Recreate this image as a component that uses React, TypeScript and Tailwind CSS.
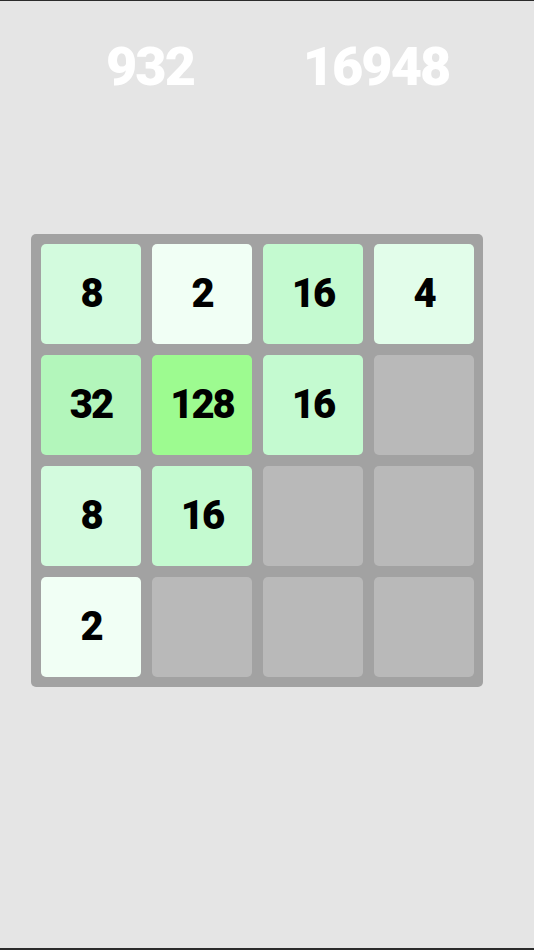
import React from "react";

type Cell = number | null;

const board: Cell[][] = [
  [8, 2, 16, 4],
  [32, 128, 16, null],
  [8, 16, null, null],
  [2, null, null, null],
];

const tileColor: Record<number, string> = {
  2: "bg-[#f1fff5]",
  4: "bg-[#e2fdea]",
  8: "bg-[#d3fbde]",
  16: "bg-[#c4fad0]",
  32: "bg-[#b3f6bb]",
  128: "bg-[#9dfb90]",
};

function Tile({ value }: { value: Cell }) {
  if (value === null) {
    return <div className="h-[100px] w-[100px] rounded-[5px] bg-[#b9b9b9]" />;
  }
  return (
    <div
      className={`flex h-[100px] w-[100px] items-center justify-center rounded-[5px] ${tileColor[value]}`}
    >
      <span className="text-[40px] leading-none font-black tracking-[-2px] text-black [font-family:Roboto,'Liberation_Sans',sans-serif]">
        {value}
      </span>
    </div>
  );
}

export default function App() {
  return (
    <div className="flex h-[950px] w-[534px] flex-col border-t border-b-2 border-[#2b2b2b] bg-[#e5e5e5]">
      <div className="mt-[39px] ml-[37px] grid w-[452px] grid-cols-2 text-[54px] leading-none font-black tracking-[-2px] text-white [font-family:Roboto,'Liberation_Sans',sans-serif]">
        <div className="text-center">932</div>
        <div className="text-center">16948</div>
      </div>
      <div className="mt-[140px] ml-[31px] grid w-[452px] grid-cols-4 gap-[11px] rounded-[5px] bg-[#a2a2a2] pt-[10px] pr-[9px] pb-[10px] pl-[10px]">
        {board.flat().map((v, i) => (
          <Tile key={i} value={v} />
        ))}
      </div>
    </div>
  );
}
